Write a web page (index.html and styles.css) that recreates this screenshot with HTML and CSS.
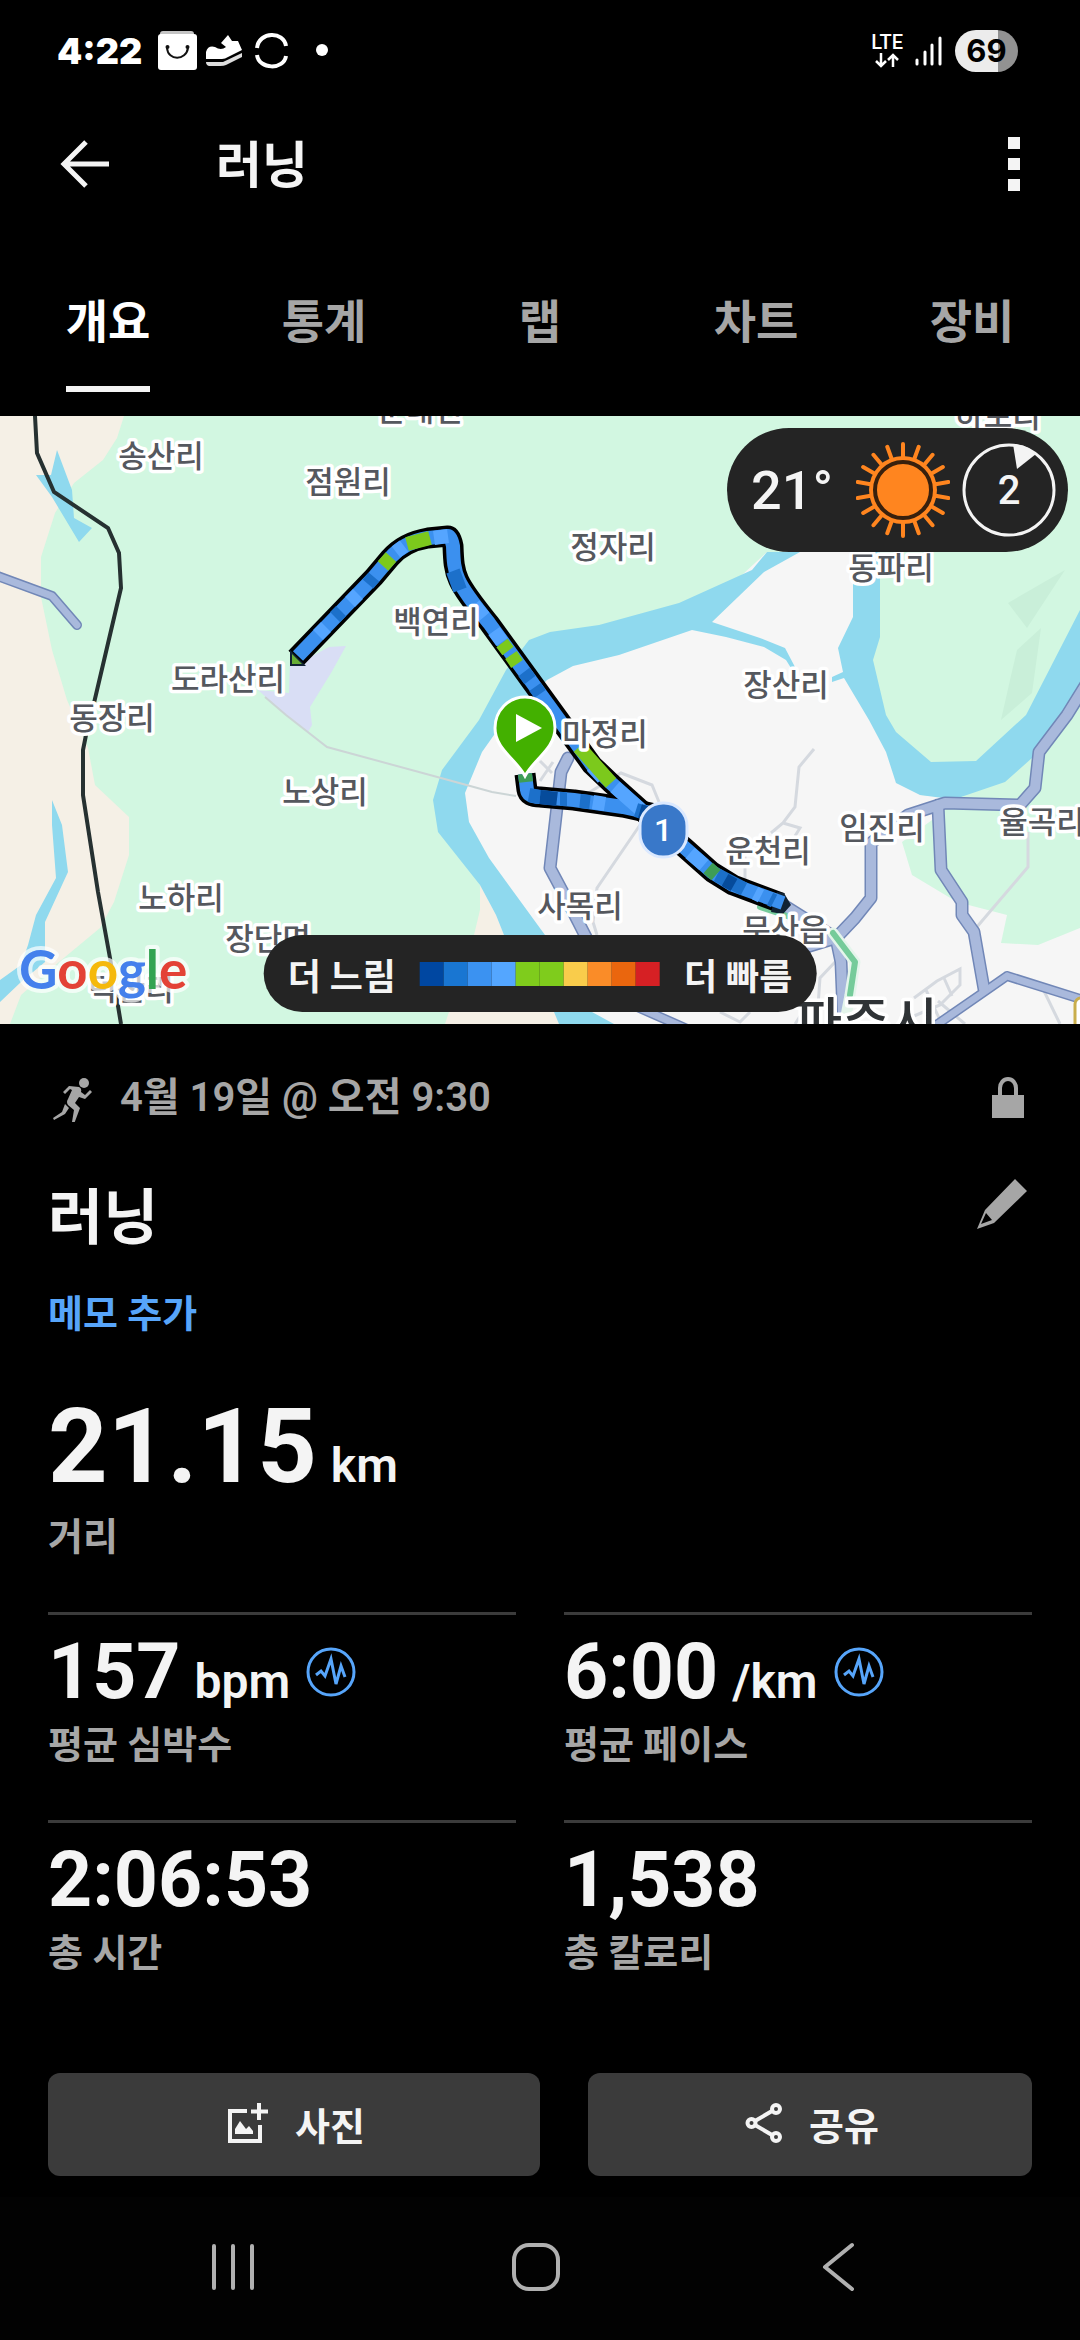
FILE: index.html
```html
<!DOCTYPE html>
<html lang="ko">
<head>
<meta charset="utf-8">
<meta name="viewport" content="width=device-width, initial-scale=1">
<title>러닝</title>
<link rel="stylesheet" href="styles.css">
</head>
<body>
<div class="statusbar">
  <div class="status-left">
    <span class="clock">4:22</span>
    <svg class="status-icons" width="172" height="40" viewBox="0 0 172 40" aria-hidden="true">
      <path d="M5 0H33Q36 0 36 3V6H2V3Q2 0 5 0Z" fill="#c4c4c4"/>
      <rect y="3" width="39" height="36" rx="3" fill="#fff"/>
      <path d="M9 17C10 30 28 30 30 17" fill="none" stroke="#111" stroke-width="2"/>
      <circle cx="9.500" cy="16" r="2" fill="#111"/><circle cx="29.500" cy="16" r="2" fill="#111"/>
      <path d="M48 26V21Q50 14 57 16Q63 20 68 16L63 12L70 4L74 10L80 10L84 19L70 26Q67 28 64 28L48 28Z" fill="#fff"/>
      <path d="M48 31H65L84 22V26L68 34Q66 35 62 35H51Q48 34 48 31Z" fill="#ddd"/>
      <path d="M99 17C101 0 126 0 128 15M99 24C101 39 126 39 128 25" fill="none" stroke="#fff" stroke-width="4"/>
      <circle cx="164" cy="19" r="6" fill="#fff"/>
    </svg>
  </div>
  <div class="status-right">
    <div class="network">
      <span class="lte">LTE</span>
      <svg width="24" height="15" viewBox="0 0 24 15" aria-hidden="true"><path d="M6 0V13M1 8L6 13L11 8M18 14V2M13 7L18 2L23 7" fill="none" stroke="#fff" stroke-width="2.500"/></svg>
    </div>
    <svg width="28" height="30" viewBox="0 0 28 30" aria-hidden="true"><path d="M2 24V28M10 16V28M17 9V28M25 2V28" stroke="#fff" stroke-width="3" stroke-linecap="round"/></svg>
    <span class="battery">69</span>
  </div>
</div>

<header class="appbar">
  <button class="icon-btn" type="button" aria-label="뒤로">
    <svg width="50" height="50" viewBox="0 0 50 50"><path d="M49 25H4M26 3L4 25L26 47" fill="none" stroke="#f4f4f4" stroke-width="5"/></svg>
  </button>
  <h1 class="appbar-title">러닝</h1>
  <button class="icon-btn" type="button" aria-label="더보기">
    <svg width="12" height="54" viewBox="0 0 12 54"><path d="M0 0H12V12H0ZM0 21H12V33H0ZM0 42H12V54H0Z" fill="#f4f4f4"/></svg>
  </button>
</header>

<nav class="tabs">
  <a class="tab tab-active" href="#overview" aria-current="page"><span>개요</span></a>
  <a class="tab" href="#stats"><span>통계</span></a>
  <a class="tab" href="#laps"><span>랩</span></a>
  <a class="tab" href="#charts"><span>차트</span></a>
  <a class="tab" href="#gear"><span>장비</span></a>
</nav>

<section class="map" aria-label="경로 지도">
  <svg class="map-canvas" viewBox="0 0 1080 608" preserveAspectRatio="xMidYMid slice">
    <rect width="1080" height="608" fill="#d2f7e1"/>
    <path fill="#f5f0e6" d="M0 0H124L117 22L103 44L74 67L55 97L41 141V181L52 234L67 284L88 332L95 369L129 401V439L114 486L100 512L59 546L21 579L10 608H0Z"/>
    <path fill="#8fd9ee" d="M57 34L72 74L74 102L92 112L79 126L52 81L36 59H51ZM52 384L62 409L68 456L45 506V546L21 566L0 586V564L21 549L28 529L36 499L56 462L52 409Z"/>
    <path fill="#f6f6f6" d="M767 136H853L853 262L920 379L958 382L1080 389V608H559L504 519L442 390L460 354L529 232L692 205Z"/>
    <path fill="#d2f7e1" d="M958 382L1005 366L1050 326L1080 270V512L1038 529L1001 527L1007 499L957 486L912 459L902 426L943 396Z"/>
    <path fill="#f5f0e6" d="M480 469L480 494L474 519L445 608H575L504 519L496 499Z"/>
    <path fill="#8fd9ee" d="M767 136L752 154L679 187L599 209L550 216L529 224L506 254L479 304L442 354L433 384L438 416L480 469L496 499L504 519L554 596L559 608H614L592 596L545 519L489 442L469 406L465 377L482 336L494 319L547 264L573 250L619 239L692 214L726 221L764 231L786 244L791 252L795 251L785 232L760 222L712 206L764 156L800 136Z"/>
    <path fill="#8fd9ee" d="M853 130V201L838 232L843 256L832 261V266L844 262L869 304L886 336L896 367L920 379L943 382H958L1005 366L1050 326L1080 267V194L1026 299L976 345L931 346L896 316L886 299L873 244L880 221V130Z"/>
    <path fill="#c9efd9" d="M1065 154L1008 187L1027 212ZM1041 212L1017 234L1010 264L1001 304L1032 277Z"/>
    <path fill="#d9def5" d="M290 244H305L329 231L346 230L331 257L310 291L312 309L308 316L286 299L258 274L289 277Z"/>
    <path fill="none" stroke="#ccd5d6" stroke-width="2" d="M265 281L286 299L327 331L441 362L492 376L516 380"/>
    <g fill="none" stroke="#d5d9df" stroke-width="3">
      <path d="M814 333L799 351L795 391L783 407L771 417M783 407L800 412L795 420M745 430V470M585 379L621 357L652 369L659 386M640 409L597 472L593 506L597 519M1028 416V451L976 512M540 345L552 357M540 365L553 346M1044 575L1060 608"/>
      <path d="M914 582L937 565L960 553V569L940 589L914 600M926 574L940 604M944 562L952 580M938 585L965 608M836 545L820 562L818 590M720 596L740 606L750 596M795 608L810 585"/>
    </g>
    <g fill="none" stroke-linejoin="round" stroke-linecap="round">
      <g stroke="#7187b7">
        <path stroke-width="10" d="M-8 158L52 180L77 209M1007 560L984 576L932 612M1007 560L1090 586M635 590L685 612"/>
        <path stroke-width="13" d="M568 342L561 356L550 452L566 482L588 525M1085 270L1067 299L1039 336L1035 372L1020 389L945 387L908 399L871 427V482L855 502L836 522L790 536M938 389L941 454L962 486V499L974 516L984 573M785 490L836 522L841 546L843 596"/>
      </g>
      <g stroke="#a9b9dc">
        <path stroke-width="7" d="M-8 158L52 180L77 209M1007 560L984 576L932 612M1007 560L1090 586M635 590L685 612"/>
        <path stroke-width="10" d="M568 342L561 356L550 452L566 482L588 525M1085 270L1067 299L1039 336L1035 372L1020 389L945 387L908 399L871 427V482L855 502L836 522L790 536M938 389L941 454L962 486V499L974 516L984 573M785 490L836 522L841 546L843 596"/>
      </g>
      <path stroke="#e4f5eb" stroke-width="11" d="M833 517L855 546L850 579L846 600"/>
      <path stroke="#75cb9a" stroke-width="6" d="M760 491L790 501M833 517L855 546L850 579"/>
    </g>
    <path fill="none" stroke="#263131" stroke-width="4" d="M35 0L37 37L54 76L108 112L119 137L121 172L94 287L86 319L83 334V379L98 476L110 542L121 608"/>
    <rect x="1075" y="582" width="20" height="40" rx="6" fill="#fff" stroke="#c9ae4c" stroke-width="3"/>

    <g fill="none" stroke="#000" stroke-width="21" stroke-linejoin="round">
      <path d="M296 242L374 161L390 142Q404 126 428 122L448 120Q451 120 453 130C454 160 455 165 489 207L547 287L592 349L611 367L650 402L685 432L712 456L733 469L781 487"/>
      <path d="M525 358L527 374Q528 381 540 381L574 384L623 391L655 398"/>
    </g>
    <path d="M290 234V250H306ZM777 476L784 477L791 489L783 498L771 496Z" fill="#123"/>
    <g fill="none" stroke="#3b90ef" stroke-width="14">
      <path stroke-linejoin="round" d="M298 240L374 161L390 142Q404 126 428 122L448 120Q451 120 453 130C454 160 455 165 489 207L547 287L592 349L611 367L650 402L685 432L712 456L733 469L783 487"/>
      <path d="M525 358L527 374Q528 381 540 381L574 384L623 391L655 398"/>
      <path stroke="#55a5ff" d="M318 219L326 211M350 186L358 178M396 136L404 130M434 122L448 120M474 189L484 201M494 215L502 226M592 350L603 362M615 371L640 393M593 386L605 388M690 437L704 449M755 477L761 480"/>
      <path stroke="#1c70ca" d="M335 201L341 195M368 168L374 161M453 155L460 174M524 256L530 264M535 271L540 278M529 379L540 381M560 383L567 383M580 385L590 386M636 394L655 400M717 459L744 473M770 483L774 485"/>
      <path stroke="#064b9b" d="M540 381L557 383M640 395L647 397M725 464L734 469"/>
      <path stroke="#7cc91c" d="M383 150L391 141M407 128L430 122M502 227L508 235M511 239L517 248M579 331L611 367"/>
      <path stroke="#3e9d55" d="M525 358L526 366M708 452L716 459"/>
    </g>
    <path d="M292 238V248H302Z" fill="#67ad35"/>

    <g class="place">
      <text x="420" y="5">군내면</text><text x="998" y="11">하포리</text>
      <text x="161" y="51">송산리</text><text x="348" y="77">점원리</text>
      <text x="613" y="142">정자리</text><text x="891" y="163">동파리</text>
      <text x="436" y="217">백연리</text><text x="228" y="274">도라산리</text>
      <text x="786" y="280">장산리</text><text x="112" y="313">동장리</text>
      <text x="325" y="387">노상리</text><text x="605" y="329">마정리</text>
      <text x="882" y="423">임진리</text><text x="1042" y="417">율곡리</text>
      <text x="768" y="446">운천리</text><text x="580" y="501">사목리</text>
      <text x="181" y="493">노하리</text><text x="268" y="534">장단면</text>
      <text x="785" y="525">문산읍</text><text x="131" y="584">덕산리</text>
      <text class="city" x="866" y="625">파주시</text>
    </g>
    <text class="google" x="19" y="573"><tspan fill="#4480ec">G</tspan><tspan fill="#e34236">o</tspan><tspan fill="#f5b90c">o</tspan><tspan fill="#4480ec">g</tspan><tspan fill="#33a352">l</tspan><tspan fill="#e34236">e</tspan></text>

    <path d="M525 360C516 343 495 333 495 312A30 31 0 0 1 555 312C555 333 534 343 525 360Z" fill="#43b000" stroke="#fff" stroke-width="3"/>
    <path d="M516 298V326L542 312Z" fill="#fff"/>
    <rect x="640" y="387" width="47" height="54" rx="23" fill="#3978c9" stroke="#dbe9ff" stroke-width="3"/>
    <text class="lap" x="663" y="425">1</text>
  </svg>

  <div class="weather">
    <span class="temp">21°</span>
    <svg width="94" height="96" viewBox="-47 -48 94 96" aria-hidden="true">
      <g stroke="#ff851f" stroke-width="4" stroke-linecap="round">
        <path id="rays" d="M0 -33V-46M0 33V46"/>
        <use href="#rays" transform="rotate(20)"/><use href="#rays" transform="rotate(40)"/><use href="#rays" transform="rotate(60)"/><use href="#rays" transform="rotate(80)"/><use href="#rays" transform="rotate(100)"/><use href="#rays" transform="rotate(120)"/><use href="#rays" transform="rotate(140)"/><use href="#rays" transform="rotate(160)"/>
      </g>
      <circle r="34" fill="#ff851f"/><circle r="28" fill="#ff851f" stroke="#38200d" stroke-width="4"/>
    </svg>
    <div class="wind">
      <svg width="94" height="94" viewBox="-47 -47 94 94" aria-hidden="true"><circle r="45" fill="none" stroke="#f4f4f4" stroke-width="3"/><path d="M4 -46Q18 -45 27 -36L8 -21Z" fill="#f4f4f4"/></svg>
      <span class="wind-speed">2</span>
    </div>
  </div>

  <div class="legend">
    <span>더 느림</span>
    <div class="scale"><i class="c1"></i><i class="c2"></i><i class="c3"></i><i class="c4"></i><i class="c5"></i><i class="c5"></i><i class="c6"></i><i class="c7"></i><i class="c8"></i><i class="c9"></i></div>
    <span>더 빠름</span>
  </div>
</section>

<main class="details" id="overview">
  <div class="date-row">
    <svg width="48" height="48" viewBox="0 0 48 48" aria-hidden="true">
      <g fill="#a6a6a6"><circle cx="36" cy="9" r="5"/><path d="M15 18L21 12L31 13Q34 14 33 18L37 21L42 16L44 18L37 25L31 23L27 29L32 34L26 50L24 48L26 36L20 31Q18 28 20 25L24 16L22 15L17 20ZM17 30L21 34L17 40L6 46L5 44L14 38Z"/></g>
    </svg>
    <time class="date">4월 19일 @ 오전 9:30</time>
    <svg width="32" height="42" viewBox="0 0 32 42" aria-label="비공개" role="img"><path d="M8 20V11A8 9 0 0 1 24 11V20" fill="none" stroke="#a6a6a6" stroke-width="4"/><path d="M0 18H32V41H0Z" fill="#a6a6a6"/></svg>
  </div>

  <div class="title-row">
    <h2 class="title">러닝</h2>
    <button class="icon-btn" type="button" aria-label="이름 편집">
      <svg width="50" height="50" viewBox="0 0 50 50"><path fill="#a6a6a6" fill-rule="evenodd" d="M38 0L50 12L17 44L0 50L8 31ZM9 34L4 45L15 41Z"/></svg>
    </button>
  </div>
  <a class="note" href="#note">메모 추가</a>

  <div class="distance">
    <div class="distance-value">21.15<span class="unit">km</span></div>
    <div class="label">거리</div>
  </div>

  <div class="metrics">
    <div class="metric">
      <div class="value-row"><span class="value">157<span class="unit">bpm</span></span>
        <svg width="50" height="50" viewBox="0 0 50 50" aria-hidden="true"><g fill="none" stroke="#57a5fa"><circle cx="25" cy="25" r="23" stroke-width="3"/><path stroke-width="3" d="M10 28L15 24L19 29L25 12L30 37L35 19L39 30"/></g></svg>
      </div>
      <div class="label">평균 심박수</div>
    </div>
    <div class="metric">
      <div class="value-row"><span class="value">6:00<span class="unit">/km</span></span>
        <svg width="50" height="50" viewBox="0 0 50 50" aria-hidden="true"><g fill="none" stroke="#57a5fa"><circle cx="25" cy="25" r="23" stroke-width="3"/><path stroke-width="3" d="M10 28L15 24L19 29L25 12L30 37L35 19L39 30"/></g></svg>
      </div>
      <div class="label">평균 페이스</div>
    </div>
    <div class="metric">
      <div class="value-row"><span class="value">2:06:53</span></div>
      <div class="label">총 시간</div>
    </div>
    <div class="metric">
      <div class="value-row"><span class="value">1,538</span></div>
      <div class="label">총 칼로리</div>
    </div>
  </div>

  <div class="actions">
    <button class="action action-photo" type="button">
      <svg width="42" height="42" viewBox="0 0 42 42" aria-hidden="true"><path d="M20 9H3V39H33V23" fill="none" stroke="#f4f4f4" stroke-width="4"/><path d="M32 1V18M24 9.500H41" stroke="#f4f4f4" stroke-width="4"/><path d="M8 32V27L13 19L19 27L22 24L26 29V32Z" fill="#f4f4f4"/></svg>
      사진
    </button>
    <button class="action action-share" type="button">
      <svg width="38" height="42" viewBox="0 0 38 42" aria-hidden="true"><g fill="none" stroke="#f4f4f4" stroke-width="4"><path d="M10 19L27 9M10 23L27 33"/><circle cx="6.500" cy="21" r="4"/><circle cx="31" cy="7" r="4"/><circle cx="31" cy="35" r="4"/></g></svg>
      공유
    </button>
  </div>
</main>

<footer class="navbar">
  <button class="icon-btn" type="button" aria-label="최근 앱"><svg width="48" height="50" viewBox="0 0 48 50"><path d="M5 4V46M24 4V46M43 4V46" stroke="#b0b0b0" stroke-width="4" stroke-linecap="round"/></svg></button>
  <button class="icon-btn" type="button" aria-label="홈"><svg width="50" height="50" viewBox="0 0 50 50"><rect x="3" y="3" width="44" height="44" rx="15" fill="none" stroke="#b0b0b0" stroke-width="4"/></svg></button>
  <button class="icon-btn" type="button" aria-label="뒤로 가기"><svg width="48" height="50" viewBox="0 0 48 50"><path d="M38 3L11 25L38 47" fill="none" stroke="#b0b0b0" stroke-width="4" stroke-linecap="round" stroke-linejoin="round"/></svg></button>
</footer>
</body>
</html>
```
FILE: styles.css
```css
* { box-sizing: border-box; }

body {
  margin: 0;
  background: #000;
  color: #f4f4f4;
  font-family: Roboto, "Noto Sans CJK KR", sans-serif;
  font-size: 40px;
}

svg { display: block; flex: none; }
h1, h2 { margin: 0; }
a { text-decoration: none; color: inherit; }

button {
  font: inherit;
  color: inherit;
  border: 0;
  padding: 0;
  background: none;
}

.icon-btn { display: flex; }

.statusbar {
  display: flex;
  justify-content: space-between;
  align-items: center;
  height: 102px;
  padding: 0 62px 0 57px;
}

.status-left, .status-right { display: flex; align-items: center; }
.status-left { gap: 16px; }
.status-right { gap: 12px; }

.clock {
  font-family: Inter, sans-serif;
  font-weight: 900;
  font-size: 36px;
  color: #fff;
}

.network { display: flex; flex-direction: column; align-items: center; gap: 3px; }
.lte { font-size: 20px; line-height: 16px; font-weight: 500; color: #fff; }

.battery {
  width: 63px;
  height: 42px;
  border-radius: 21px;
  background: linear-gradient(90deg, #ececec 68%, #929292 68%);
  color: #000;
  font: 700 31px/42px Inter, sans-serif;
  text-align: center;
}

.appbar {
  display: flex;
  align-items: center;
  height: 124px;
  padding: 0 60px;
}

.appbar-title {
  flex: 1;
  margin-left: 106px;
  padding-top: 4px;
  font-size: 50px;
  line-height: 60px;
}

.tabs {
  display: flex;
  padding-bottom: 24px;
}

.tab {
  flex: 1;
  display: flex;
  justify-content: center;
  font-size: 46px;
  line-height: 60px;
  font-weight: 700;
  color: #a6a6a6;
}

.tab span {
  padding: 66px 0 34px;
  border-bottom: 6px solid transparent;
}

.tab-active { color: #fff; }
.tab-active span { border-color: #f4f4f4; }

.map { position: relative; overflow: hidden; }
.map-canvas { width: 100%; height: auto; }

.place {
  font-family: "Noto Sans CJK KR", sans-serif;
  font-size: 31px;
  font-weight: 500;
  text-anchor: middle;
  fill: #55585e;
  stroke: #fff;
  stroke-width: 7px;
  stroke-linejoin: round;
  paint-order: stroke;
}

.city { font-size: 52px; fill: #2f3336; }

.google {
  font-family: Lato, sans-serif;
  font-size: 53px;
  font-weight: 700;
  stroke: #ffffffb0;
  stroke-width: 8px;
  stroke-linejoin: round;
  paint-order: stroke;
}

.lap { font-size: 32px; font-weight: 500; fill: #fff; text-anchor: middle; }

.weather {
  position: absolute;
  top: 12px;
  right: 12px;
  display: flex;
  align-items: center;
  gap: 12px;
  height: 124px;
  padding: 4px 12px 0 24px;
  padding: 0 12px 0 24px;
  border-radius: 62px;
  background: #242424;
}

.temp { width: 93px; font-size: 54px; font-weight: 500; }

.wind { display: grid; place-items: center; }
.wind > * { grid-area: 1 / 1; }
.wind-speed { font-size: 40px; font-weight: 500; }

.legend {
  position: absolute;
  left: 50%;
  bottom: 12px;
  transform: translateX(-50%);
  display: flex;
  align-items: center;
  gap: 24px;
  height: 77px;
  padding: 0 24px;
  border-radius: 39px;
  background: #242424;
  font-size: 36px;
  font-weight: 700;
  white-space: nowrap;
}

.scale { display: flex; }
.scale i { width: 24px; height: 24px; }
.c1 { background: #0047a1; }
.c2 { background: #1976d2; }
.c3 { background: #3b92f1; }
.c4 { background: #54a6ff; }
.c5 { background: #7fcc1c; }
.c6 { background: #f9cc4b; }
.c7 { background: #fa8c28; }
.c8 { background: #ea660e; }
.c9 { background: #d62024; }

.details { padding: 44px 48px 21px; }

.date-row {
  display: flex;
  align-items: center;
  height: 60px;
  padding-right: 8px;
  color: #a6a6a6;
}

.date { flex: 1; margin-left: 24px; font-weight: 600; line-height: 56px; }

.title-row {
  display: flex;
  align-items: flex-start;
  justify-content: space-between;
  margin-top: 51px;
  padding-right: 5px;
}

.title { font-size: 60px; line-height: 80px; }

.note {
  display: block;
  margin-top: 30px;
  line-height: 50px;
  font-size: 38px;
  font-weight: 700;
  color: #57a5fa;
}

.distance { margin-top: 48px; }

.distance-value {
  height: 120px;
  font-size: 104px;
  line-height: 120px;
  font-weight: 700;
}

.unit { margin-left: 14px; font-size: 48px; line-height: 48px; font-weight: 600; }

.label { font-size: 38px; line-height: 50px; font-weight: 700; color: #a6a6a6; }
.distance .label { margin-top: 5px; }

.metrics {
  display: grid;
  grid-template-columns: 1fr 1fr;
  gap: 50px 48px;
  margin-top: 50px;
}

.metric { border-top: 3px solid #3b3b3b; padding-top: 8px; }
.value-row { display: flex; align-items: center; gap: 16px; height: 97px; }
.value { font-size: 77px; line-height: 96px; font-weight: 700; }

.actions { display: flex; gap: 48px; margin-top: 95px; }

.action {
  display: flex;
  align-items: center;
  justify-content: center;
  gap: 26px;
  height: 103px;
  padding: 0 0 3px 4px;
  border-radius: 12px;
  background: #3b3b3b;
  font-size: 38px;
  font-weight: 700;
}

.action-photo { flex: 41; }
.action-share { flex: 37; }

.navbar {
  display: flex;
  justify-content: space-between;
  align-items: center;
  height: 143px;
  padding: 0 218px 3px 209px;
  background: #020202;
}
```
